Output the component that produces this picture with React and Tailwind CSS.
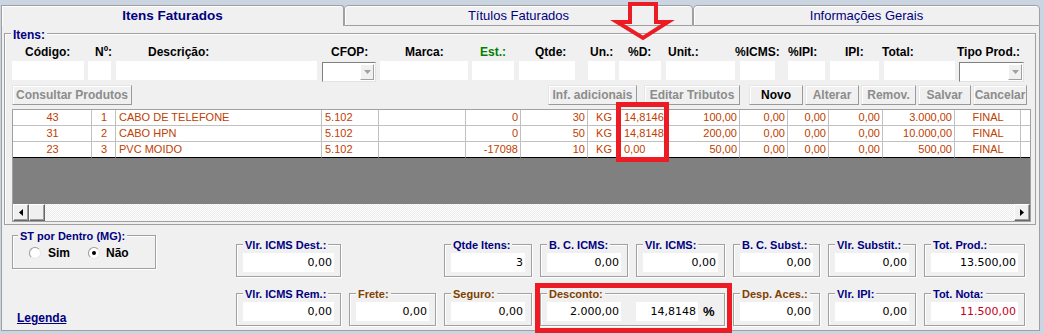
import React from 'react';

const heads = [
  { t: 'Código:', c: 'ml-[13px] w-[70px]' },
  { t: 'Nº:', c: 'w-[53px]' },
  { t: 'Descrição:', c: 'w-[183px]' },
  { t: 'CFOP:', c: 'w-[74px]' },
  { t: 'Marca:', c: 'w-[75px]' },
  { t: 'Est.:', c: 'w-[55px] text-[#008000]' },
  { t: 'Qtde:', c: 'w-[55px]' },
  { t: 'Un.:', c: 'w-[38px]' },
  { t: '%D:', c: 'w-[40px]' },
  { t: 'Unit.:', c: 'w-[67px]' },
  { t: '%ICMS:', c: 'w-[53px]' },
  { t: '%IPI:', c: 'w-[57px]' },
  { t: 'IPI:', c: 'w-[37px]' },
  { t: 'Total:', c: 'w-[75px]' },
  { t: 'Tipo Prod.:', c: 'w-[80px]' },
];

const inputs = [
  { c: 'w-[72px]' },
  { c: 'ml-[4px] w-[23px]' },
  { c: 'ml-[5px] w-[201px]' },
  { c: 'ml-[5px] w-[54px]', combo: true },
  { c: 'ml-[4px] w-[88px]' },
  { c: 'ml-[4px] w-[42px]' },
  { c: 'ml-[5px] w-[56px]' },
  { c: 'ml-[13px] w-[27px]' },
  { c: 'ml-[4px] w-[42px]' },
  { c: 'ml-[5px] w-[69px]' },
  { c: 'ml-[5px] w-[35px]' },
  { c: 'ml-[13px] w-[37px]' },
  { c: 'ml-[5px] w-[49px]' },
  { c: 'ml-[5px] w-[71px]' },
  { c: 'ml-[4px] w-[65px]', combo: true },
];

const buttons = [
  { t: 'Consultar Produtos', c: 'w-[120px]' },
  { t: 'Inf. adicionais', c: 'ml-[416px] w-[89px]' },
  { t: 'Editar Tributos', c: 'ml-[7px] w-[96px]' },
  { t: 'Novo', c: 'ml-[9px] w-[54px]', on: true },
  { t: 'Alterar', c: 'ml-[2px] w-[54px]' },
  { t: 'Remov.', c: 'ml-[2px] w-[55px]' },
  { t: 'Salvar', c: 'ml-[2px] w-[53px]' },
  { t: 'Cancelar', c: 'ml-[2px] w-[54px]' },
];

const cols = [
  'w-[79px] text-center',
  'w-[24px] text-center',
  'w-[206px] text-left',
  'w-[57px] text-left',
  'w-[87px] text-left',
  'w-[55px] text-right',
  'w-[67px] text-right',
  'w-[32px] text-center',
  'w-[47px] text-left pl-[4px]',
  'w-[73px] text-right',
  'w-[48px] text-right',
  'w-[41px] text-right',
  'w-[54px] text-right',
  'w-[72px] text-right',
  'w-[66px] text-center',
  'w-[9px]',
];

const rows = [
  ['43', '1', 'CABO DE TELEFONE', '5.102', '', '0', '30', 'KG', '14,8146', '100,00', '0,00', '0,00', '0,00', '3.000,00', 'FINAL', ''],
  ['31', '2', 'CABO HPN', '5.102', '', '0', '50', 'KG', '14,8148', '200,00', '0,00', '0,00', '0,00', '10.000,00', 'FINAL', ''],
  ['23', '3', 'PVC MOIDO', '5.102', '', '-17098', '10', 'KG', '0,00', '50,00', '0,00', '0,00', '0,00', '500,00', 'FINAL', ''],
];

function Combo({ className }) {
  return (
    <div className={`${className} h-[20px] mt-[1px] flex bg-white border border-t-[#808080] border-l-[#808080] border-r-[#e3e3e3] border-b-[#e3e3e3]`}>
      <div className="flex-1" />
      <div className="w-[14px] m-[1px] flex items-center justify-center bg-[#f0f0f0] border border-t-white border-l-white border-r-[#a0a0a0] border-b-[#a0a0a0]">
        <svg width="7" height="4" viewBox="0 0 7 4"><polygon points="0,0 7,0 3.5,4" fill="#a0a0a0" /></svg>
      </div>
    </div>
  );
}

function GridRow({ data, last }) {
  return (
    <div className="flex h-[16px]">
      {cols.map((c, i) => (
        <div
          key={i}
          className={`${c} h-full shrink-0 overflow-hidden whitespace-nowrap pl-[3px] pr-[2px] leading-[15px] border-b ${i < cols.length - 1 ? 'border-r border-r-[#c0c0c0]' : ''} ${last ? 'border-b-black' : 'border-b-[#c0c0c0]'}`}
        >
          {data[i]}
        </div>
      ))}
    </div>
  );
}

function ScrollBtn({ dir }) {
  return (
    <div className="w-[16px] h-[17px] shrink-0 flex items-center justify-center bg-[#f0f0f0] border border-t-white border-l-white border-r-[#696969] border-b-[#696969] shadow-[inset_-1px_-1px_0_#a0a0a0]">
      {dir === 'l' && <svg width="4" height="7" viewBox="0 0 4 7"><polygon points="4,0 4,7 0,3.5" fill="#000" /></svg>}
      {dir === 'r' && <svg width="4" height="7" viewBox="0 0 4 7"><polygon points="0,0 0,7 4,3.5" fill="#000" /></svg>}
    </div>
  );
}

function Box({ label, brown, value, red, className = '', children }) {
  return (
    <div className={`relative h-[33px] border border-[#a0a0a0] shadow-[inset_1px_1px_0_#fff,1px_1px_0_#fff] pt-[8px] px-[6px] ${className}`}>
      <span className={`absolute left-[6px] top-[-7px] bg-[#f0f0f0] px-[2px] text-[11px] font-bold leading-[14px] whitespace-nowrap ${brown ? 'text-[#804000]' : 'text-[#000080]'}`}>
        {label}
      </span>
      {children || (
        <div className={`h-[19px] bg-white text-right pr-[2px] font-['DejaVu_Sans',sans-serif] text-[11px] leading-[19px] ${red ? 'text-[#c8001e]' : 'text-black'}`}>
          {value}
        </div>
      )}
    </div>
  );
}

function Radio({ checked }) {
  return (
    <div className="w-[12px] h-[12px] rounded-full bg-white border border-t-[#9a9a9a] border-l-[#9a9a9a] border-r-[#e6e6e6] border-b-[#e6e6e6] flex items-center justify-center">
      {checked && <div className="w-[4px] h-[4px] rounded-full bg-black" />}
    </div>
  );
}

export default function App() {
  return (
    <div className="relative w-[1044px] h-[334px] overflow-hidden bg-[#cbd5e1] font-['Liberation_Sans',Arial,sans-serif] text-black">
      <div className="flex flex-col h-full pt-[5px] pb-[3px] pl-[1px] pr-[4px]">
        {/* tabs */}
        <div className="flex h-[21px] shrink-0">
          <div className="w-[343px] bg-[#f0f0f0] border-t border-l border-r border-[#a0a0a0] rounded-tr-[3px] shadow-[inset_1px_1px_0_#fff] flex items-center justify-center pt-[1px] text-[13.5px] font-bold text-[#000080]">
            Itens Faturados
          </div>
          <div className="w-[349px] bg-[#f0f0f0] border border-[#a0a0a0] rounded-t-[4px] shadow-[inset_1px_1px_0_#fff] flex items-center justify-center text-[13px] text-[#000080]">
            Títulos Faturados
          </div>
          <div className="flex-1 bg-[#f0f0f0] border border-[#a0a0a0] rounded-t-[4px] shadow-[inset_1px_1px_0_#fff] flex items-center justify-center text-[13px] text-[#000080]">
            Informações Gerais
          </div>
        </div>

        {/* body */}
        <div className="flex-1 bg-[#f0f0f0] border-l border-r border-b border-[#a0a0a0]">
          {/* Itens group */}
          <div className="relative mt-[7px] ml-[2px] w-[1032px] border border-[#a0a0a0] shadow-[inset_1px_1px_0_#fff] pt-[11px] pb-[2px] px-[7px]">
            <span className="absolute left-[6px] top-[-6px] bg-[#f0f0f0] px-[2px] text-[12px] font-bold leading-[14px] text-[#000080]">Itens:</span>

            <div className="flex h-[14px] text-[12px] font-bold leading-[14px]">
              {heads.map((h) => (
                <span key={h.t} className={`${h.c} shrink-0 whitespace-nowrap`}>{h.t}</span>
              ))}
            </div>

            <div className="flex h-[20px] mt-[2px]">
              {inputs.map((f, i) =>
                f.combo ? <Combo key={i} className={`${f.c} shrink-0`} /> : <div key={i} className={`${f.c} h-[19px] shrink-0 bg-white`} />
              )}
            </div>

            <div className="flex h-[20px] mt-[4px]">
              {buttons.map((b) => (
                <div
                  key={b.t}
                  className={`${b.c} shrink-0 h-full flex items-center justify-center text-[12px] font-bold whitespace-nowrap bg-[#f0f0f0] border border-t-[#e6e6e6] border-l-[#e6e6e6] border-r-[#9a9a9a] border-b-[#9a9a9a] shadow-[inset_1px_1px_0_#fff] ${b.on ? 'text-black' : 'text-[#8c8c8c]'}`}
                >
                  {b.t}
                </div>
              ))}
            </div>

            {/* grid */}
            <div className="mt-[4px] w-[1019px] h-[113px] flex flex-col border border-[#a0a0a0] bg-white text-[11px] text-[#c04000]">
              {rows.map((r, i) => (
                <GridRow key={i} data={r} last={i === rows.length - 1} />
              ))}
              <div className="flex-1 bg-[#808080]" />
              <div className="flex h-[17px] bg-[image:repeating-conic-gradient(#ffffff_0%_25%,#ebebeb_0%_50%)] bg-[length:2px_2px]">
                <ScrollBtn dir="l" />
                <ScrollBtn />
                <div className="flex-1" />
                <ScrollBtn dir="r" />
              </div>
            </div>
          </div>

          {/* bottom */}
          <div className="flex">
            <div className="ml-[10px] w-[144px] shrink-0">
              <div className="relative mt-[10px] h-[34px] border border-[#a0a0a0] shadow-[inset_1px_1px_0_#fff,1px_1px_0_#fff] pt-[10px] pl-[16px]">
                <span className="absolute left-[5px] top-[-7px] bg-[#f0f0f0] px-[2px] text-[11px] font-bold leading-[14px] text-[#000080] whitespace-nowrap">
                  ST por Dentro (MG):
                </span>
                <div className="flex items-center h-[14px] text-[12px] font-bold">
                  <Radio />
                  <span className="ml-[7px]">Sim</span>
                  <div className="ml-[18px]"><Radio checked /></div>
                  <span className="ml-[6px]">Não</span>
                </div>
              </div>
              <div className="mt-[42px] ml-[5px] text-[12px] leading-[15px] font-bold text-[#000080] underline">Legenda</div>
            </div>

            <div className="ml-[80px] mt-[19px] grid grid-cols-[105px_87px_88px_88px_89px_87px_88px_101px] gap-x-[8px] gap-y-[15px]">
              <Box label="Vlr. ICMS Dest.:" value="0,00" />
              <div />
              <Box label="Qtde Itens:" value="3" />
              <Box label="B. C. ICMS:" value="0,00" />
              <Box label="Vlr. ICMS:" value="0,00" />
              <Box label="B. C. Subst.:" value="0,00" />
              <Box label="Vlr. Substit.:" value="0,00" />
              <Box label="Tot. Prod.:" value="13.500,00" />

              <Box label="Vlr. ICMS Rem.:" value="0,00" />
              <Box label="Frete:" brown value="0,00" />
              <Box label="Seguro:" brown value="0,00" />
              <Box label="Desconto:" brown className="col-span-2">
                <div className="flex items-center">
                  <div className="w-[74px] h-[19px] bg-white text-right pr-[2px] font-['DejaVu_Sans',sans-serif] text-[11px] leading-[19px]">2.000,00</div>
                  <div className="ml-[15px] w-[62px] h-[19px] bg-white text-right pr-[2px] font-['DejaVu_Sans',sans-serif] text-[11px] leading-[19px]">14,8148</div>
                  <span className="ml-[5px] text-[13px] font-bold leading-[19px]">%</span>
                </div>
              </Box>
              <Box label="Desp. Aces.:" brown value="0,00" />
              <Box label="Vlr. IPI:" value="0,00" />
              <Box label="Tot. Nota:" value="11.500,00" red />
            </div>
          </div>
        </div>
      </div>

      {/* red annotations */}
      <svg className="absolute left-[610px] top-0" width="65" height="44" viewBox="0 0 65 44">
        <polygon points="20,4 46,4 46,22 58,22 33,38 7,22 20,22" fill="none" stroke="#ed1c24" strokeWidth="4" strokeLinejoin="miter" />
      </svg>
      <div className="absolute left-[616px] top-[102px] w-[53px] h-[60px] border-[5px] border-[#ed1c24]" />
      <div className="absolute left-[535px] top-[283px] w-[197px] h-[50px] border-[5px] border-[#ed1c24]" />
    </div>
  );
}
